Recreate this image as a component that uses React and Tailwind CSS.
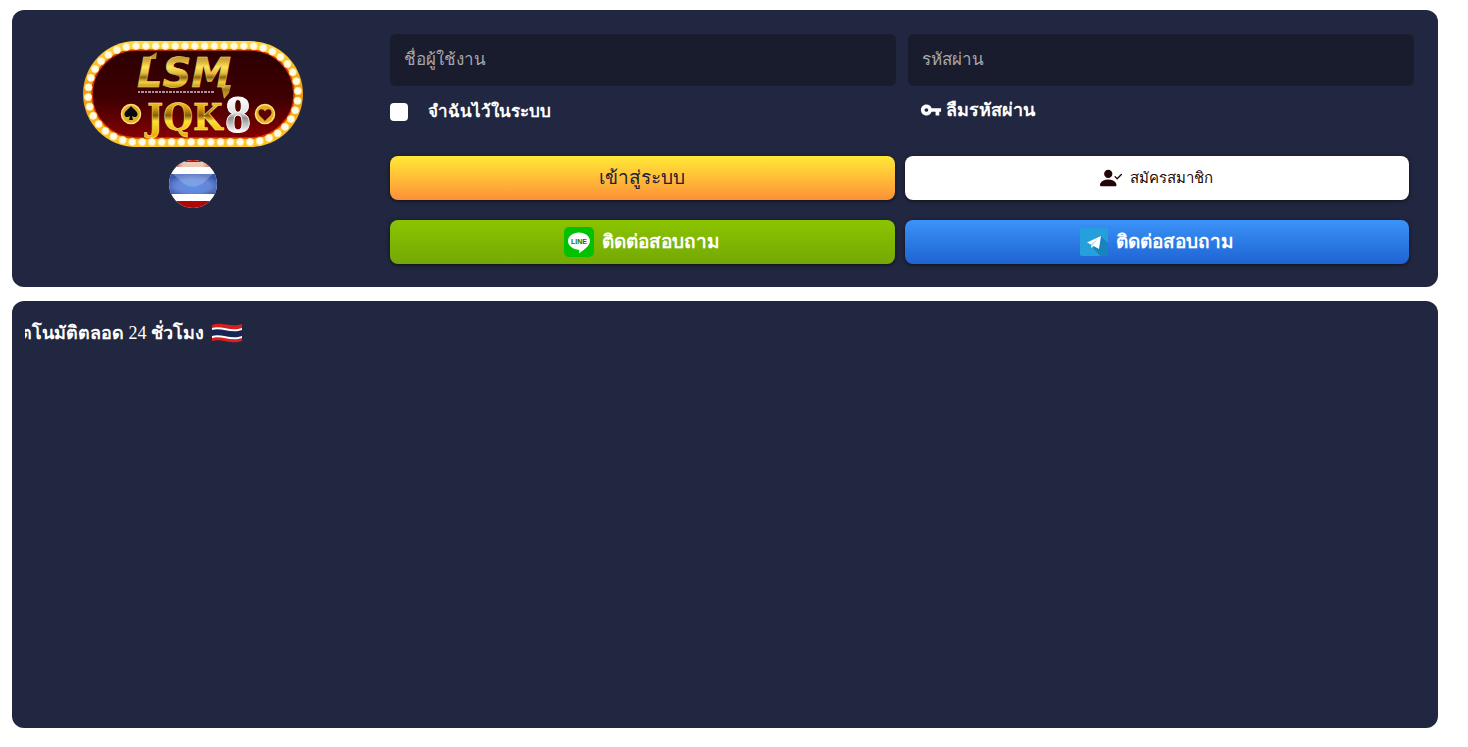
import { BsPersonCheckFill } from 'react-icons/bs';
import { MdVpnKey } from 'react-icons/md';

// light bulbs running round the edge of the sign
const bulbs = (() => {
  const w = 210;
  const h = 96;
  const r = h / 2;
  const straight = w - h;
  const arc = Math.PI * r;
  const total = 2 * (straight + arc);
  const count = 54;
  return Array.from({ length: count }, (_, i) => {
    let d = (i * total) / count;
    if (d < straight) return [6 + r + d, 6];
    d -= straight;
    if (d < arc) {
      const a = d / r - Math.PI / 2;
      return [6 + w - r + r * Math.cos(a), 6 + r + r * Math.sin(a)];
    }
    d -= arc;
    if (d < straight) return [6 + w - r - d, 6 + h];
    d -= straight;
    const a = d / r + Math.PI / 2;
    return [6 + r + r * Math.cos(a), 6 + r + r * Math.sin(a)];
  });
})();

const Logo = () => (
  <svg viewBox="0 0 222 108" className="w-[222px] h-[108px]" role="img" aria-label="LSM JQK8">
    <defs>
      <linearGradient id="rim" x1="0" y1="0" x2="0" y2="1">
        <stop offset="0" stopColor="#ffd83a" />
        <stop offset="0.5" stopColor="#f09a0c" />
        <stop offset="1" stopColor="#ffc928" />
      </linearGradient>
      <linearGradient id="felt" x1="0" y1="0" x2="0" y2="1">
        <stop offset="0" stopColor="#2c0002" />
        <stop offset="0.55" stopColor="#3f0002" />
        <stop offset="1" stopColor="#850003" />
      </linearGradient>
      <linearGradient id="gold" gradientUnits="userSpaceOnUse" x1="0" y1="12" x2="0" y2="59">
        <stop offset="0" stopColor="#a88030" />
        <stop offset="0.2" stopColor="#d8ae38" />
        <stop offset="0.32" stopColor="#ffe458" />
        <stop offset="0.46" stopColor="#e0b838" />
        <stop offset="0.54" stopColor="#8c6414" />
        <stop offset="0.64" stopColor="#f4cf3c" />
        <stop offset="0.8" stopColor="#a47a1c" />
        <stop offset="1" stopColor="#d8aa30" />
      </linearGradient>
      <linearGradient id="coin" gradientUnits="userSpaceOnUse" x1="0" y1="57" x2="0" y2="94">
        <stop offset="0" stopColor="#ffe23c" />
        <stop offset="0.3" stopColor="#d9a010" />
        <stop offset="0.5" stopColor="#8a5a08" />
        <stop offset="0.65" stopColor="#ffe030" />
        <stop offset="1" stopColor="#eab308" />
      </linearGradient>
      <linearGradient id="silver" gradientUnits="userSpaceOnUse" x1="0" y1="57" x2="0" y2="92">
        <stop offset="0" stopColor="#ffffff" />
        <stop offset="0.45" stopColor="#e3e3e3" />
        <stop offset="0.6" stopColor="#8f8f8f" />
        <stop offset="1" stopColor="#ffffff" />
      </linearGradient>
    </defs>
    <rect x="1" y="1" width="220" height="106" rx="53" fill="url(#rim)" />
    <rect x="10" y="10" width="202" height="88" rx="44" fill="url(#felt)" stroke="#d93a00" strokeWidth="1.5" />
    {bulbs.map(([x, y], i) => (
      <circle key={i} cx={x} cy={y} r="3.6" fill="#fffbe6" stroke="#ffe9a0" strokeWidth="0.8" />
    ))}
    <path d="M64 19 75 12 74 19Z" fill="url(#gold)" />
    <path d="M139 45h10l-2 8-5 6Z" fill="url(#gold)" />
    <text
      x="55"
      y="47"
      fontFamily="DejaVu Sans"
      fontWeight="700"
      fontStyle="italic"
      fontSize="40"
      fill="url(#gold)"
      stroke="#ffe27a"
      strokeWidth="0.4"
    >
      LSM
    </text>
    <path d="M56 52h76" stroke="#c9c3d4" strokeWidth="1.4" strokeDasharray="2 1 3 1" />
    <text
      x="65"
      y="90"
      fontFamily="DejaVu Serif Condensed, DejaVu Serif"
      fontWeight="700"
      fontSize="38"
      fill="url(#coin)"
      stroke="#fff09a"
      strokeWidth="0.5"
    >
      JQK
    </text>
    <text
      x="143"
      y="92"
      fontFamily="Liberation Serif"
      fontWeight="700"
      fontSize="52"
      fill="url(#silver)"
      stroke="#ffffff"
      strokeWidth="0.8"
    >
      8
    </text>
    <circle cx="49" cy="74" r="9.500" fill="#e6ad20" stroke="#ffe27a" strokeWidth="1.5" />
    <path
      d="M49 66c2 3 6.500 5 6.500 8.500 0 2.500-3 3.500-5.500 1.500l1 4h-4l1-4c-2.500 2-5.500 1-5.500-1.500 0-3.500 4.500-5.500 6.500-8.500Z"
      fill="#050914"
    />
    <circle cx="183" cy="74" r="9.500" fill="#e6ad20" stroke="#ffe27a" strokeWidth="1.5" />
    <path d="M183 81c-2-3-6.500-5-6.500-8.500 0-3.500 4.500-4.500 6.500-1 2-3.500 6.500-2.500 6.500 1 0 3.500-4.500 5.500-6.500 8.500Z" fill="#5a0204" />
  </svg>
);

const RoundFlag = () => (
  <svg viewBox="0 0 48 48" className="w-12 h-12">
    <defs>
      <clipPath id="disc">
        <circle cx="24" cy="24" r="24" />
      </clipPath>
      <radialGradient id="sheen" cx="0.5" cy="0.6" r="0.6">
        <stop offset="0" stopColor="#5b93ea" />
        <stop offset="0.6" stopColor="#6585d6" />
        <stop offset="1" stopColor="#3a57a8" />
      </radialGradient>
      <linearGradient id="topband" x1="0" x2="1">
        <stop offset="0" stopColor="#b50b0b" />
        <stop offset="0.3" stopColor="#ecc9b5" />
        <stop offset="0.7" stopColor="#ecc9b5" />
        <stop offset="1" stopColor="#b50b0b" />
      </linearGradient>
    </defs>
    <g clipPath="url(#disc)">
      <path fill="#fff" d="M0 0h48v48H0z" />
      <path fill="url(#topband)" d="M0 0h48v7H0z" />
      <path fill="#c01010" d="M0 0h48v2H0z" />
      <path fill="url(#sheen)" d="M0 14h48v20H0z" />
      <path fill="#a9bdf0" opacity="0.4" d="M4 14h40l-11 10q-9 5-18 0Z" />
      <path fill="#b00808" d="M0 41h48v7H0z" />
    </g>
  </svg>
);

const LineIcon = () => (
  <svg viewBox="0 0 30 30" className="w-[30px] h-[30px]">
    <rect width="30" height="30" rx="5" fill="#00c200" />
    <path
      d="M15 5.500c6.200 0 11 3.800 11 8.600 0 5-6.500 9-10 11.600-.8.500-1.200.2-1-.7l.3-2C9 22.500 4 19 4 14.100 4 9.300 8.800 5.500 15 5.500Z"
      fill="#fff"
    />
    <text x="15" y="17" textAnchor="middle" fontFamily="Liberation Sans" fontWeight="700" fontSize="7" fill="#087a08">
      LINE
    </text>
  </svg>
);

const TelegramIcon = () => (
  <svg viewBox="0 0 28 28" className="w-7 h-7">
    <rect width="28" height="28" rx="2" fill="#25a0dc" />
    <path d="M21 8 28 15v13h-8l-7-8Z" fill="#1784bd" />
    <path d="M7 14.500 21 8l-2 13-5.500-3-2 2-.5-3.500Z" fill="#fff" />
    <path d="m11 16.500 7-6-5.500 7-1 2.500Z" fill="#b9d8ec" />
  </svg>
);

const WavyFlag = () => (
  <svg viewBox="0 0 30 20" className="w-[30px] h-5 shrink-0">
    <path d="M0 2C9-2 19 5 30 1v17c-11 4-21-3-30 0Z" fill="#d81e1e" />
    <path d="M0 5C9 2 19 9 30 5v10c-11 4-21-3-30 0Z" fill="#fff" />
    <path d="M0 7C9 4 19 11 30 7v6c-11 4-21-3-30 0Z" fill="#172554" />
  </svg>
);

const field =
  'h-[52px] w-full rounded-md bg-[#181c2d] px-3.5 text-[17px] text-gray-200 placeholder:text-[#a8a6ac] outline-none';
const button = 'flex h-11 items-center justify-center rounded-lg shadow-[0_1px_4px_rgba(0,0,0,0.6)]';

export default function App() {
  return (
    <div className="flex flex-col gap-3.5 pt-2.5 pb-5 pl-3 pr-[30px] bg-white font-['Liberation_Serif',serif]">
      <section className="flex rounded-xl bg-[#222741] pt-6 pb-[23px] pr-6">
        <div className="flex w-[378px] shrink-0 flex-col items-center gap-3 pt-1.5 pr-4">
          <Logo />
          <button type="button" aria-label="ภาษาไทย" className="rounded-full">
            <RoundFlag />
          </button>
        </div>

        <form className="flex-1" onSubmit={(e) => e.preventDefault()}>
          <div className="grid grid-cols-2 gap-x-3 gap-y-2.5">
            <input type="text" aria-label="ชื่อผู้ใช้งาน" placeholder="ชื่อผู้ใช้งาน" className={field} />
            <input type="password" aria-label="รหัสผ่าน" placeholder="รหัสผ่าน" className={field} />
            <label className="flex h-8 items-center gap-5 text-[17px] font-bold text-white">
              <input type="checkbox" className="h-[18px] w-[18px] appearance-none rounded-sm bg-white checked:bg-blue-500" />
              จำฉันไว้ในระบบ
            </label>
            <a href="#forgot" className="flex h-7 items-center gap-1 px-3 text-lg font-bold text-white">
              <MdVpnKey className="size-[22px]" />
              ลืมรหัสผ่าน
            </a>
          </div>

          <div className="mt-7 grid grid-cols-2 gap-x-2.5 gap-y-5 pr-[5px]">
            <button type="submit" className={`${button} bg-linear-to-b from-[#ffe935] to-[#fb9038] text-[19px] text-[#1d1d38]`}>
              เข้าสู่ระบบ
            </button>
            <button type="button" className={`${button} gap-2 bg-white text-[15px] text-[#220608]`}>
              <BsPersonCheckFill className="size-[22px]" />
              สมัครสมาชิก
            </button>
            <a href="#line" className={`${button} gap-2 bg-linear-to-b from-[#8bc400] to-[#74a905] text-[19px] font-bold text-white`}>
              <LineIcon />
              ติดต่อสอบถาม
            </a>
            <a href="#telegram" className={`${button} gap-2 bg-linear-to-b from-[#3b93f8] to-[#1f63d3] text-[19px] font-bold text-white`}>
              <TelegramIcon />
              ติดต่อสอบถาม
            </a>
          </div>
        </form>
      </section>

      <section className="min-h-[427px] rounded-xl bg-[#222741] px-[13px] py-[18px]">
        <div className="flex w-[217px] items-center justify-end gap-2 overflow-hidden whitespace-nowrap text-lg text-white">
          <span>
            <b>อัตโนมัติตลอด</b> 24 <b>ชั่วโมง</b>
          </span>
          <WavyFlag />
        </div>
      </section>
    </div>
  );
}
